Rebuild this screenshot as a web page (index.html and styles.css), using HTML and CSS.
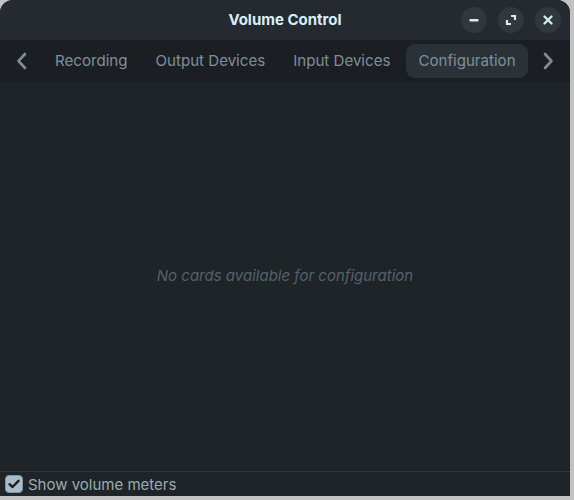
FILE: index.html
```html
<!DOCTYPE html>
<html lang="en">
<head>
  <meta charset="UTF-8">
  <title>Volume Control</title>
  <link rel="stylesheet" href="styles.css">
</head>
<body>

<div class="window">
  <header class="titlebar">
    <span class="title">Volume Control</span>
    <div class="win-buttons">
      <button class="win-btn" aria-label="Minimize">
        <svg width="12" height="12" viewBox="0 0 12 12"><rect x="1.5" y="5" width="9" height="2.4" rx="0.6" fill="#d6ecf3"/></svg>
      </button>
      <button class="win-btn" aria-label="Maximize">
        <svg width="12" height="12" viewBox="0 0 12 12" fill="none" stroke="#d6ecf3" stroke-width="2.2">
          <path d="M6 2 H10 V6"/>
          <path d="M2 6 V10 H6"/>
        </svg>
      </button>
      <button class="win-btn" aria-label="Close">
        <svg width="12" height="12" viewBox="0 0 12 12" stroke="#d6ecf3" stroke-width="2.3" stroke-linecap="round">
          <path d="M2.5 2.5 L9.5 9.5 M9.5 2.5 L2.5 9.5"/>
        </svg>
      </button>
    </div>
  </header>

  <nav class="tabs">
    <span class="arrow prev">
      <svg width="14" height="20" viewBox="0 0 14 20" fill="none" stroke="#7d8d98" stroke-width="2.6" stroke-linecap="round" stroke-linejoin="round"><path d="M10 3 L3.5 10 L10 17"/></svg>
    </span>
    <span class="tab">Recording</span>
    <span class="tab">Output Devices</span>
    <span class="tab">Input Devices</span>
    <span class="tab active">Configuration</span>
    <span class="arrow next">
      <svg width="14" height="20" viewBox="0 0 14 20" fill="none" stroke="#7d8d98" stroke-width="2.6" stroke-linecap="round" stroke-linejoin="round"><path d="M4 3 L10.5 10 L4 17"/></svg>
    </span>
  </nav>

  <main class="content">
    <p class="empty">No cards available for configuration</p>
  </main>

  <footer class="footer">
    <span class="check">
      <svg width="12" height="10" viewBox="0 0 12 10" fill="none" stroke="#1b2024" stroke-width="2.4" stroke-linecap="round" stroke-linejoin="round"><path d="M1.5 5.2 L4.5 8 L10.5 1.8"/></svg>
    </span>
    <span class="check-label">Show volume meters</span>
  </footer>
</div>

</body>
</html>
```

FILE: styles.css
```css
body {
  margin: 0;
  width: 574px;
  height: 500px;
  background-color: #c2c2c2;
  font-family: Inter, "Noto Sans", sans-serif;
  overflow: hidden;
}

.window {
  width: 570px;
  height: 496px;
  display: flex;
  flex-direction: column;
  background-color: #1f2428;
  border-radius: 13px 13px 0 0;
  overflow: hidden;
}

.titlebar {
  height: 40px;
  flex-shrink: 0;
  display: flex;
  align-items: center;
  justify-content: center;
  position: relative;
  background-color: #242a2f;
}

.title {
  color: #d8eef5;
  font-size: 15px;
  font-weight: 700;
  margin-top: -2px;
}

.win-buttons {
  position: absolute;
  right: 9px;
  top: 7px;
  display: flex;
  gap: 11px;
}

.win-btn {
  width: 26px;
  height: 26px;
  padding: 0;
  border: none;
  border-radius: 50%;
  background-color: #30383e;
  display: flex;
  align-items: center;
  justify-content: center;
}

.tabs {
  height: 42px;
  flex-shrink: 0;
  display: flex;
  align-items: center;
  background-color: #1b1f23;
  padding: 0 0 0 15px;
}

.arrow {
  display: flex;
  align-items: center;
  flex-shrink: 0;
}

.arrow.prev {
  width: 24px;
}

.arrow.next {
  width: 26px;
  margin-left: 13px;
}

.tab {
  flex-shrink: 0;
  white-space: nowrap;
  color: #7f8f9a;
  font-size: 15.1px;
  padding: 7px 12px 8px;
  margin-left: 4px;
  border-radius: 9px;
}

.tab.active {
  background-color: #2b3237;
}

.content {
  flex: 1;
  display: flex;
  align-items: center;
  justify-content: center;
}

.empty {
  margin: 0 0 2px 0;
  color: #55616a;
  font-size: 15px;
  font-style: italic;
}

.footer {
  height: 24px;
  flex-shrink: 0;
  display: flex;
  align-items: center;
  border-top: 1px solid #31383d;
  padding-left: 5px;
}

.check {
  width: 18px;
  height: 18px;
  box-sizing: border-box;
  border-radius: 4px;
  background-color: #a9bccb;
  border: 1px solid #7f93a2;
  display: flex;
  align-items: center;
  justify-content: center;
}

.check-label {
  margin-left: 5px;
  color: #9caab4;
  font-size: 15px;
}
```
